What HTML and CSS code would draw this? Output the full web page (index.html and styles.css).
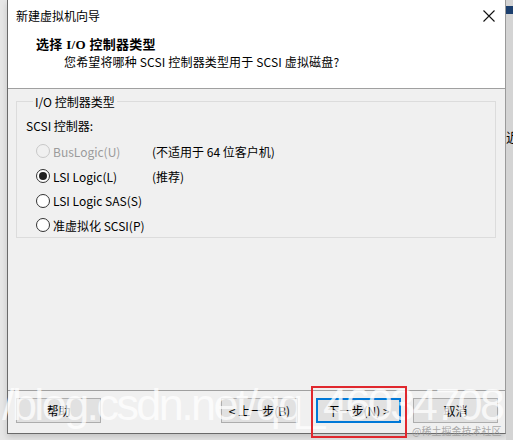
FILE: index.html
```html
<!DOCTYPE html>
<html lang="zh-CN">
    <head>
        <meta charset="UTF-8" />
        <title>新建虚拟机向导</title>
        <link rel="stylesheet" href="styles.css">
    </head>
    <body>
        <div class="desk">
            <div class="dialog">
                <div class="head">
                    <div class="titlebar">
                        <span class="title">新建虚拟机向导</span>
                        <svg class="close" width="12" height="12" viewBox="0 0 12 12">
                            <path d="M0.5 0.5 L11.5 11.5 M11.5 0.5 L0.5 11.5" stroke="#111" stroke-width="1.1" fill="none" />
                        </svg>
                    </div>
                    <div class="heading">选择 I/O 控制器类型</div>
                    <div class="sub">您希望将哪种 SCSI 控制器类型用于 SCSI 虚拟磁盘?</div>
                </div>
                <div class="body">
                    <fieldset class="group">
                        <legend>I/O 控制器类型</legend>
                        <div class="label">SCSI 控制器:</div>
                        <div class="row disabled">
                            <span class="radio"></span>
                            <span class="name">BusLogic(U)</span>
                            <span class="note">(不适用于 64 位客户机)</span>
                        </div>
                        <div class="row">
                            <span class="radio on"></span>
                            <span class="name">LSI Logic(L)</span>
                            <span class="note">(推荐)</span>
                        </div>
                        <div class="row">
                            <span class="radio"></span>
                            <span class="name">LSI Logic SAS(S)</span>
                        </div>
                        <div class="row">
                            <span class="radio"></span>
                            <span class="name">准虚拟化 SCSI(P)</span>
                        </div>
                    </fieldset>
                </div>
                <div class="foot">
                    <div class="btn">帮助</div>
                    <div class="spacer"></div>
                    <div class="btn">&lt; 上一步(B)</div>
                    <div class="btn primary">下一步(N) &gt;</div>
                    <div class="btn">取消</div>
                </div>
            </div>
            <div class="side">
                <span class="arrow"></span>
                <span class="cut">近</span>
            </div>
            <div class="mark">/blog.csdn.net/qq_46034708</div>
            <div class="redbox"></div>
            <div class="credit">@稀土掘金技术社区</div>
        </div>
    </body>
</html>
```

FILE: styles.css
```css
* {
    margin: 0px;
    padding: 0px;
    box-sizing: border-box;
}
body {
    width: 513px;
    height: 440px;
    overflow: hidden;
    background-color: #e6e6e6;
    font-family: "Noto Sans CJK SC", "Noto Sans", sans-serif;
    font-size: 12px;
    color: #000;
}
.desk {
    position: relative;
    display: flex;
    height: 440px;
    padding-left: 7px;
}
.dialog {
    width: 499px;
    height: 434px;
    display: flex;
    flex-direction: column;
    background-color: #f0f0f0;
    border-left: 1px solid #6a6a6a;
    border-right: 1px solid #9a9a9a;
    border-bottom: 1px solid #6a6a6a;
    box-shadow: 0 3px 6px rgba(0, 0, 0, 0.15);
}
.side {
    flex: 1;
    background-color: #d4d4d4;
    display: flex;
    flex-direction: column;
    padding-top: 6px;
    overflow: hidden;
}
.arrow {
    width: 8px;
    height: 8px;
    background-color: #1c3f6e;
}
.cut {
    margin-top: 116px;
    font-size: 13px;
    line-height: 14px;
}

/* header */
.head {
    height: 89px;
    background-color: #fff;
    border-bottom: 1px solid #a0a0a0;
}
.titlebar {
    height: 31px;
    display: flex;
    align-items: center;
    justify-content: space-between;
    padding-left: 8px;
    padding-right: 10px;
}
.title {
    font-size: 12px;
}
.heading {
    margin-top: 5px;
    padding-left: 28px;
    font-size: 13px;
    font-weight: bold;
    font-family: "Liberation Serif", "Noto Sans CJK SC", serif;
    line-height: 17px;
    letter-spacing: 0.3px;
}
.sub {
    padding-left: 56px;
    line-height: 17px;
    font-size: 12px;
    letter-spacing: 0.15px;
}

/* body */
.body {
    flex: 1;
    padding: 4px 9px 0 8px;
}
.group {
    height: 145px;
    border: 1px solid #dcdcdc;
    padding: 7px 0 0 9px;
}
.group legend {
    margin-left: 7px;
    padding: 0 2px;
    line-height: 17px;
}
.label {
    line-height: 17px;
    margin-bottom: 5px;
}
.row {
    display: flex;
    align-items: center;
    height: 24.7px;
    padding-left: 10px;
}
.radio {
    width: 14px;
    height: 14px;
    border: 1px solid #333;
    border-radius: 50%;
    background-color: #fff;
    display: flex;
    align-items: center;
    justify-content: center;
    margin-right: 3px;
}
.radio.on::after {
    content: "";
    width: 8px;
    height: 8px;
    border-radius: 50%;
    background-color: #222;
}
.name {
    width: 99px;
}
.disabled .radio {
    border-color: #c8c8c8;
    background-color: #f0f0f0;
}
.disabled .name {
    color: #9b9b9b;
}

/* footer */
.foot {
    height: 42px;
    border-top: 1px solid #a0a0a0;
    display: flex;
    gap: 13px;
    padding: 7px 7px 0 8px;
    margin-bottom: 1px;
}
.spacer {
    flex: 1;
}
.btn {
    height: 25px;
    width: 85px;
    border: 1px solid #adadad;
    background-color: #e1e1e1;
    display: flex;
    align-items: center;
    justify-content: center;
}
.btn:nth-child(3) {
    width: 77px;
    margin-right: 5px;
}
.btn.primary {
    border: 2px solid #0078d7;
}
.btn:last-child {
    margin-left: -1px;
}

/* overlays */
.mark {
    position: absolute;
    left: 2px;
    top: 379px;
    font-family: "Liberation Sans", sans-serif;
    font-size: 45px;
    letter-spacing: -2.6px;
    color: rgba(255, 255, 255, 0.75);
    white-space: nowrap;
}
.redbox {
    position: absolute;
    left: 311px;
    top: 386px;
    width: 96px;
    height: 52px;
    border: 2.5px solid #e0282e;
}
.credit {
    position: absolute;
    left: 412px;
    top: 423px;
    font-size: 10px;
    color: rgba(150, 150, 150, 0.8);
    white-space: nowrap;
}
```
